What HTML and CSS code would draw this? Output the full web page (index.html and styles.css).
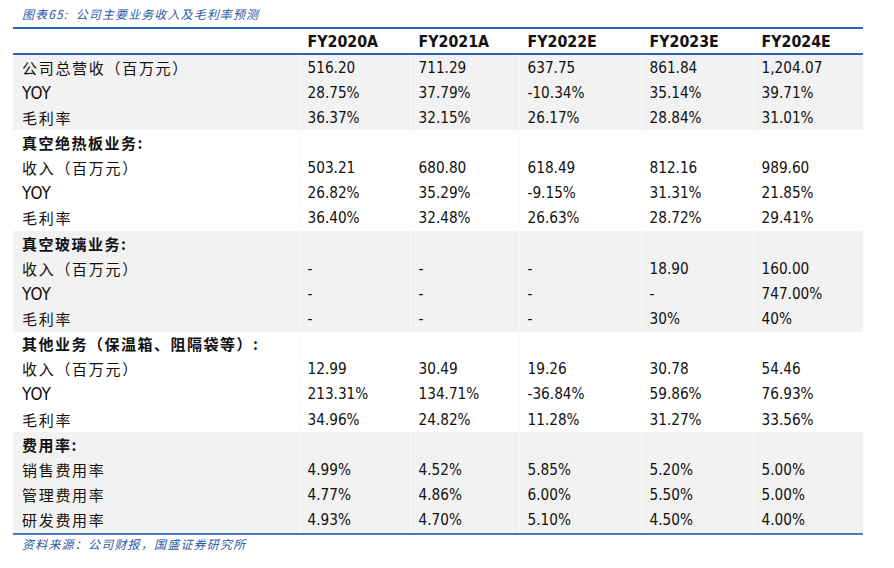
FILE: index.html
```html
<!DOCTYPE html>
<html lang="zh">
<head>
<meta charset="utf-8">
<title>公司主要业务收入及毛利率预测</title>
<link rel="stylesheet" href="styles.css">
</head>
<body>
<div class="page">
  <div class="caption">图表65:&nbsp; 公司主要业务收入及毛利率预测</div>
  <table class="fin">
    <colgroup>
      <col class="c-label"><col class="c1"><col class="c2"><col class="c3"><col class="c4"><col class="c5">
    </colgroup>
    <thead>
      <tr><th></th><th>FY2020A</th><th>FY2021A</th><th>FY2022E</th><th>FY2023E</th><th>FY2024E</th></tr>
    </thead>
    <tbody class="shade">
      <tr><td class="lbl">公司总营收（百万元）</td><td>516.20</td><td>711.29</td><td>637.75</td><td>861.84</td><td>1,204.07</td></tr>
      <tr><td class="lbl en">YOY</td><td>28.75%</td><td>37.79%</td><td>-10.34%</td><td>35.14%</td><td>39.71%</td></tr>
      <tr><td class="lbl">毛利率</td><td>36.37%</td><td>32.15%</td><td>26.17%</td><td>28.84%</td><td>31.01%</td></tr>
    </tbody>
    <tbody>
      <tr><td class="lbl sec">真空绝热板业务:</td><td></td><td></td><td></td><td></td><td></td></tr>
      <tr><td class="lbl">收入（百万元）</td><td>503.21</td><td>680.80</td><td>618.49</td><td>812.16</td><td>989.60</td></tr>
      <tr><td class="lbl en">YOY</td><td>26.82%</td><td>35.29%</td><td>-9.15%</td><td>31.31%</td><td>21.85%</td></tr>
      <tr><td class="lbl">毛利率</td><td>36.40%</td><td>32.48%</td><td>26.63%</td><td>28.72%</td><td>29.41%</td></tr>
    </tbody>
    <tbody class="shade">
      <tr><td class="lbl sec">真空玻璃业务:</td><td></td><td></td><td></td><td></td><td></td></tr>
      <tr><td class="lbl">收入（百万元）</td><td>-</td><td>-</td><td>-</td><td>18.90</td><td>160.00</td></tr>
      <tr><td class="lbl en">YOY</td><td>-</td><td>-</td><td>-</td><td>-</td><td>747.00%</td></tr>
      <tr><td class="lbl">毛利率</td><td>-</td><td>-</td><td>-</td><td>30%</td><td>40%</td></tr>
    </tbody>
    <tbody>
      <tr><td class="lbl sec">其他业务（保温箱、阻隔袋等）:</td><td></td><td></td><td></td><td></td><td></td></tr>
      <tr><td class="lbl">收入（百万元）</td><td>12.99</td><td>30.49</td><td>19.26</td><td>30.78</td><td>54.46</td></tr>
      <tr><td class="lbl en">YOY</td><td>213.31%</td><td>134.71%</td><td>-36.84%</td><td>59.86%</td><td>76.93%</td></tr>
      <tr><td class="lbl">毛利率</td><td>34.96%</td><td>24.82%</td><td>11.28%</td><td>31.27%</td><td>33.56%</td></tr>
    </tbody>
    <tbody class="shade last">
      <tr><td class="lbl sec">费用率:</td><td></td><td></td><td></td><td></td><td></td></tr>
      <tr><td class="lbl">销售费用率</td><td>4.99%</td><td>4.52%</td><td>5.85%</td><td>5.20%</td><td>5.00%</td></tr>
      <tr><td class="lbl">管理费用率</td><td>4.77%</td><td>4.86%</td><td>6.00%</td><td>5.50%</td><td>5.00%</td></tr>
      <tr><td class="lbl">研发费用率</td><td>4.93%</td><td>4.70%</td><td>5.10%</td><td>4.50%</td><td>4.00%</td></tr>
    </tbody>
  </table>
  <div class="source">资料来源：公司财报，国盛证券研究所</div>
</div>
</body>
</html>
```

FILE: styles.css
```css
html, body {
  margin: 0;
  padding: 0;
  background: #ffffff;
}

.page {
  padding: 6px 0 0 13px;
  width: 850px;
}

.caption {
  font-family: "Noto Sans CJK SC", sans-serif;
  font-style: italic;
  font-size: 12px;
  line-height: 16px;
  height: 16px;
  color: #2a5aa8;
  padding-left: 9px;
  letter-spacing: 1.1px;
}

.fin {
  margin-top: 5px;
  width: 850px;
  border-collapse: collapse;
  table-layout: fixed;
  font-family: "DejaVu Sans Condensed", "Liberation Sans", "Noto Sans CJK SC", sans-serif;
  font-size: 15.2px;
  color: #111111;
  border-top: 2px solid #2b63b9;
  border-bottom: 2px solid #4a78c4;
}

.c-label { width: 286px; }
.c1 { width: 111px; }
.c2 { width: 109px; }
.c3 { width: 122px; }
.c4 { width: 112px; }
.c5 { width: 110px; }

.fin th {
  height: 24px;
  padding: 0 0 0 8px;
  text-align: left;
  font-weight: bold;
  font-size: 15.8px;
  border-bottom: 2px solid #2b63b9;
  border-left: 1px solid #fbfbfb;
  vertical-align: middle;
}

.fin td {
  height: 25.15px;
  padding: 0 0 0 8px;
  text-align: left;
  vertical-align: middle;
  border-left: 1px solid #fafafa;
  line-height: 20px;
  white-space: nowrap;
}

.fin td:first-child,
.fin th:first-child {
  border-left: none;
}

.shade td {
  background: #f2f2f2;
}

.fin td.lbl {
  padding-left: 9px;
  font-family: "Noto Sans CJK SC", sans-serif;
  font-size: 15px;
  letter-spacing: 1.7px;
  font-weight: 400;
}

.fin td.lbl.en {
  font-family: "DejaVu Sans Condensed", "Liberation Sans", sans-serif;
  font-size: 17px;
  letter-spacing: 0;
}

.fin td.lbl.sec {
  font-weight: 700;
  letter-spacing: 1.5px;
}

.source {
  font-family: "Noto Sans CJK SC", sans-serif;
  font-style: italic;
  font-size: 12px;
  line-height: 16px;
  color: #2a5aa8;
  padding-left: 9px;
  margin-top: 1px;
  letter-spacing: 1.2px;
}
```
